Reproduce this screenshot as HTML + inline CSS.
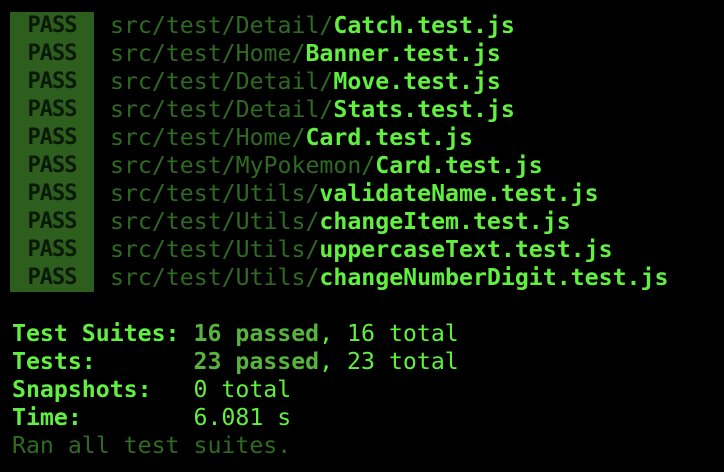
<!DOCTYPE html>
<html><head><style>
html,body{margin:0;padding:0;background:#000;}
body{width:724px;height:472px;overflow:hidden;position:relative;font-family:"DejaVu Sans Mono","Liberation Mono",monospace;font-size:23.2px;}
.r{position:absolute;left:0;height:28px;line-height:28px;white-space:pre;}
.p{position:absolute;left:10px;width:84px;height:28px;background:#2d5e1e;color:#0a1a06;font-weight:bold;text-align:center;font-size:22px;letter-spacing:-1px;}
.path{position:absolute;left:110px;color:#2f6a22;}
.b{color:#62f040;font-weight:bold;}
.s{position:absolute;left:12px;}
.lb{color:#62f040;font-weight:bold;}
.m{color:#58b43e;font-weight:bold;}
.n{color:#62f040;}
.d{color:#2f6a22;}
</style></head><body>
<div class="r" style="top:12px"><span class="p">PASS</span><span class="path">src/test/Detail/<span class="b">Catch.test.js</span></span></div>
<div class="r" style="top:40px"><span class="p">PASS</span><span class="path">src/test/Home/<span class="b">Banner.test.js</span></span></div>
<div class="r" style="top:68px"><span class="p">PASS</span><span class="path">src/test/Detail/<span class="b">Move.test.js</span></span></div>
<div class="r" style="top:96px"><span class="p">PASS</span><span class="path">src/test/Detail/<span class="b">Stats.test.js</span></span></div>
<div class="r" style="top:124px"><span class="p">PASS</span><span class="path">src/test/Home/<span class="b">Card.test.js</span></span></div>
<div class="r" style="top:152px"><span class="p">PASS</span><span class="path">src/test/MyPokemon/<span class="b">Card.test.js</span></span></div>
<div class="r" style="top:180px"><span class="p">PASS</span><span class="path">src/test/Utils/<span class="b">validateName.test.js</span></span></div>
<div class="r" style="top:208px"><span class="p">PASS</span><span class="path">src/test/Utils/<span class="b">changeItem.test.js</span></span></div>
<div class="r" style="top:236px"><span class="p">PASS</span><span class="path">src/test/Utils/<span class="b">uppercaseText.test.js</span></span></div>
<div class="r" style="top:264px"><span class="p">PASS</span><span class="path">src/test/Utils/<span class="b">changeNumberDigit.test.js</span></span></div>

<div class="r" style="top:320px"><span class="s"><span class="lb">Test Suites:</span> <span class="m">16 passed</span><span class="n">, 16 total</span></span></div>
<div class="r" style="top:348px"><span class="s"><span class="lb">Tests:</span>       <span class="m">23 passed</span><span class="n">, 23 total</span></span></div>
<div class="r" style="top:376px"><span class="s"><span class="lb">Snapshots:</span>   <span class="n">0 total</span></span></div>
<div class="r" style="top:404px"><span class="s"><span class="lb">Time:</span>        <span class="n">6.081 s</span></span></div>
<div class="r" style="top:432px"><span class="s d">Ran all test suites.</span></div>
</body></html>
